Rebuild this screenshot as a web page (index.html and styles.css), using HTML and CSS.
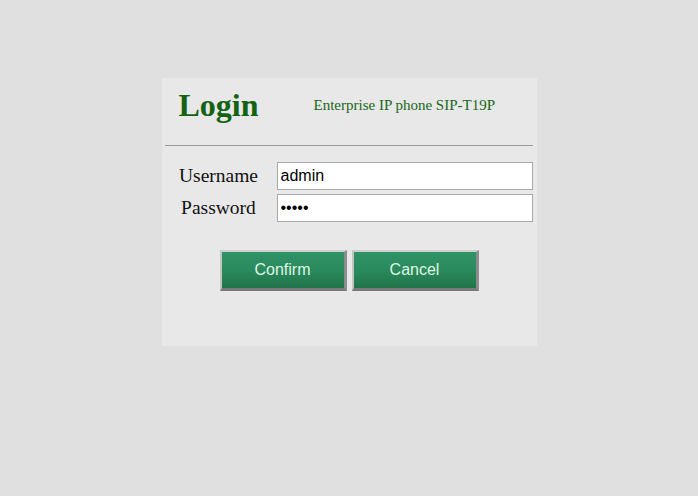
FILE: index.html
```html
<!DOCTYPE html>
<html>
<head>
<meta charset="utf-8">
<title>Login</title>
<link rel="stylesheet" href="styles.css">
</head>
<body>
<div class="panel">
  <div class="header">
    <h1 class="title">Login</h1>
    <span class="model">Enterprise IP phone SIP-T19P</span>
  </div>
  <div class="rule"></div>
  <div class="form">
    <div class="row">
      <label class="label">Username</label>
      <input class="field" type="text" value="admin">
    </div>
    <div class="row">
      <label class="label">Password</label>
      <input class="field" type="password" value="admin">
    </div>
  </div>
  <div class="actions">
    <button class="btn">Confirm</button>
    <button class="btn">Cancel</button>
  </div>
</div>
</body>
</html>
```
FILE: styles.css
```css
html, body {
  margin: 0;
  padding: 0;
  background: #e0e0e0;
  height: 100%;
}
body {
  display: flex;
  justify-content: center;
  align-items: flex-start;
  padding-top: 78px;
  box-sizing: border-box;
}
.panel {
  width: 375px;
  height: 268px;
  background: #e8e8e8;
  box-sizing: border-box;
  padding: 0 4px 0 3px;
}
.header {
  display: flex;
  align-items: flex-start;
  padding: 9px 0 0 14px;
  box-sizing: border-box;
  height: 67px;
}
.title {
  margin: 0;
  font-family: "Liberation Serif", serif;
  font-weight: bold;
  font-size: 32px;
  color: #146214;
  line-height: 36px;
}
.model {
  margin-left: 55px;
  margin-top: 10px;
  font-family: "Liberation Serif", serif;
  font-size: 15px;
  line-height: 17px;
  color: #176717;
}
.rule {
  height: 1px;
  background: #9a9a9a;
}
.form {
  padding-top: 16px;
  display: flex;
  flex-direction: column;
  gap: 4px;
}
.row {
  display: flex;
  align-items: center;
}
.label {
  width: 108px;
  margin-right: 4px;
  text-align: center;
  font-family: "Liberation Serif", serif;
  font-size: 19.5px;
  color: #111;
}
.field {
  width: 256px;
  height: 28px;
  box-sizing: border-box;
  border: 1px solid #a9a9a9;
  background: #fff;
  margin: 0;
  padding: 0 3px;
  font-family: "Liberation Sans", Arial, sans-serif;
  font-size: 16px;
  color: #000;
  outline: none;
}
.actions {
  display: flex;
  justify-content: center;
  gap: 5px;
  padding-top: 28px;
  padding-left: 1px;
}
.btn {
  width: 127px;
  height: 41px;
  box-sizing: border-box;
  border-style: solid;
  border-width: 2px 3px 3px 2px;
  border-color: #cfcfcf #8c8c8c #7a7a7a #c4c4c4;
  background: linear-gradient(to bottom, #2f9366 0%, #2a8a5d 50%, #217449 100%);
  color: #dff7e6;
  font-family: "Liberation Sans", Arial, sans-serif;
  font-size: 16px;
  padding: 0;
  cursor: pointer;
}
```
